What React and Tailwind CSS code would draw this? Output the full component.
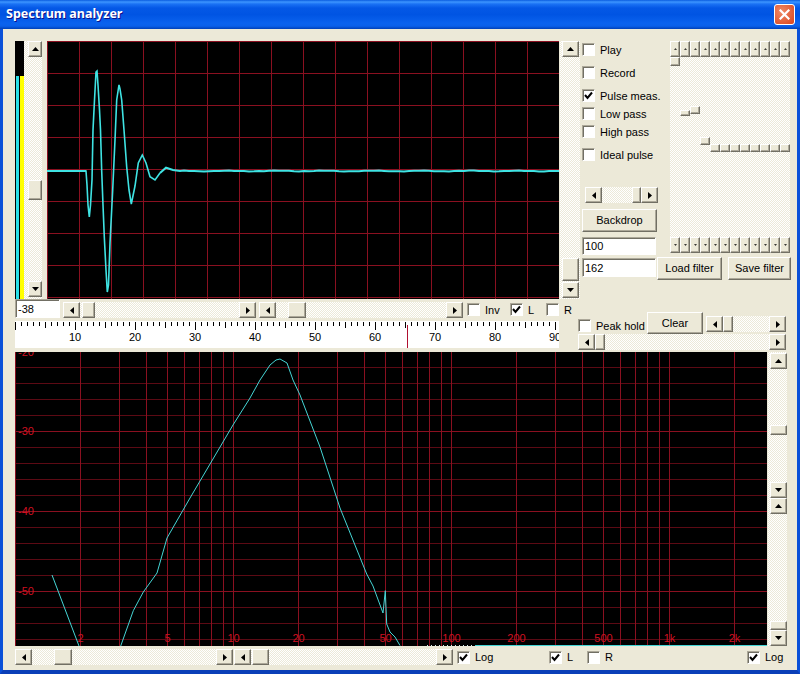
import React from "react";

const face = "bg-[#ece9d8]";
const dither = "bg-[repeating-conic-gradient(#ffffff_0_25%,#ece9d8_0_50%)] bg-[length:2px_2px]";
const raised = "bg-[#ece9d8] border border-t-white border-l-white border-r-[#716f64] border-b-[#716f64] shadow-[inset_-1px_-1px_0_#aca899]";
const sunken = "bg-white border border-t-[#aca899] border-l-[#aca899] border-r-white border-b-white shadow-[inset_1px_1px_0_#716f64]";

function Arrow({ dir, small }) {
  const pts = {
    up: "0,4 7,4 3.5,0",
    down: "0,0 7,0 3.5,4",
    left: "4,0 4,7 0,3.5",
    right: "0,0 0,7 4,3.5",
  };
  const vertical = dir === "up" || dir === "down";
  const w = vertical ? 7 : 4;
  const h = vertical ? 4 : 7;
  return (
    <svg width={small ? 3 : w} height={small ? 2 : h} viewBox={`0 0 ${w} ${h}`}>
      <polygon points={pts[dir]} fill="#000" />
    </svg>
  );
}

function ScrollBtn({ dir, className }) {
  return (
    <div className={`${raised} flex items-center justify-center shrink-0 ${className}`}>
      <Arrow dir={dir} />
    </div>
  );
}

function HScroll({ className, thumb }) {
  return (
    <div className={`${dither} flex h-[16px] shrink-0 ${className}`}>
      <ScrollBtn dir="left" className="w-[17px]" />
      <div className="flex-1">
        <div className={`${raised} h-full ${thumb}`} />
      </div>
      <ScrollBtn dir="right" className="w-[17px]" />
    </div>
  );
}

function VScroll({ className, thumb }) {
  return (
    <div className={`flex flex-col shrink-0 ${className}`}>
      <ScrollBtn dir="up" className="h-[16px]" />
      <div className="flex-1">
        <div className={`${raised} w-full ${thumb}`} />
      </div>
      <ScrollBtn dir="down" className="h-[16px]" />
    </div>
  );
}

function SliderCol({ thumb }) {
  return (
    <div className="flex flex-col w-[10px] h-[212px]">
      <div className={`${raised} h-[16px] flex items-center justify-center`}>
        <Arrow dir="up" small />
      </div>
      <div className="flex-1">
        <div className={`${raised} w-full ${thumb}`} />
      </div>
      <div className={`${raised} h-[16px] flex items-center justify-center`}>
        <Arrow dir="down" small />
      </div>
    </div>
  );
}

function Check({ label, checked, className = "" }) {
  return (
    <div className={`flex items-center h-[13px] shrink-0 ${className}`}>
      <div className={`${sunken} w-[13px] h-[13px] flex items-center justify-center shrink-0`}>
        {checked && (
          <svg width="9" height="9" viewBox="0 0 9 9">
            <polyline points="1,4 3.5,7 8,1.5" fill="none" stroke="#000" strokeWidth="2" />
          </svg>
        )}
      </div>
      <span className="ml-[5px] pt-[1px] whitespace-nowrap">{label}</span>
    </div>
  );
}

function Btn({ className, children }) {
  return (
    <div className={`${raised} flex items-center justify-center shrink-0 ${className}`}>{children}</div>
  );
}

function Field({ className, children }) {
  return (
    <div className={`${sunken} flex items-center pl-[2px] pt-[1px] shrink-0 ${className}`}>{children}</div>
  );
}

// scope trace, taken off the picture
const scopePulse = [
  [0, 171], [39, 171], [40, 185], [41, 205], [42.3, 217], [43.5, 205], [45, 180], [46, 130], [47.5, 100], [49, 72], [50, 71],
  [51, 85], [52.5, 110], [53.5, 130], [54.7, 171], [56, 205], [57.3, 237], [59, 270], [60.3, 292], [61.5, 285], [63, 243],
  [65.7, 190], [68, 140], [69.7, 100], [71.5, 88], [72, 85], [73, 89], [74.7, 100], [77, 130], [79.7, 167], [82, 190], [84.3, 204],
  [88, 186], [91.3, 163], [95.3, 155], [99, 163], [103, 176.7], [108, 180], [113, 173],
];
const scopeTail = [[0, 171], [39, 171]];
const scopeFlat = [[113, 173], [119, 167.7], [126, 170], [133, 171]];
for (let x = 137; x <= 512; x += 5) {
  scopeFlat.push([x, 171 + 0.35 * Math.sin(x * 0.13) + 0.2 * Math.sin(x * 0.41)]);
}
const toPoints = (pts) => pts.map((p) => `${p[0]},${p[1] - 41}`).join(" ");

function Scope() {
  const v = [];
  for (let x = 0; x < 512; x += 32) v.push(x + 0.5);
  const h = [];
  for (let y = 0; y < 258; y += 32) h.push(y + 0.5);
  return (
    <svg width="512" height="258" className="bg-black shrink-0 block">
      {v.map((x) => <line key={x} x1={x} x2={x} y1="0" y2="258" stroke="#8a1020" />)}
      {h.map((y) => <line key={y} y1={y} y2={y} x1="0" x2="512" stroke="#8a1020" />)}
      <polyline points={toPoints(scopePulse)} fill="none" stroke="#3fe3e3" strokeWidth="1.6" />
      <polyline points={toPoints(scopeTail)} fill="none" stroke="#3fe3e3" strokeWidth="2" />
      <polyline points={toPoints(scopeFlat)} fill="none" stroke="#3fe3e3" strokeWidth="2" />
    </svg>
  );
}

function Ruler() {
  const ticks = [];
  for (let u = 0; u <= 90; u++) ticks.push(u);
  return (
    <svg width="544" height="27" className="bg-white block">
      {ticks.map((u) => (
        <line
          key={u}
          x1={u * 6 + 0.5}
          x2={u * 6 + 0.5}
          y1="1"
          y2={u % 10 === 0 ? 9 : u % 5 === 0 ? 7 : 5}
          stroke="#000"
        />
      ))}
      {[10, 20, 30, 40, 50, 60, 70, 80, 90].map((n) => (
        <text key={n} x={n * 6} y="20" textAnchor="middle" className="text-[11px] fill-black">{n}</text>
      ))}
      <line x1="392.5" x2="392.5" y1="4" y2="27" stroke="#b01030" />
    </svg>
  );
}

const tracePts = [
  [120.7, 294], [133.3, 258.7], [143.3, 240], [157, 221], [167, 186], [190, 146], [233, 73], [250, 46], [260, 28], [270, 13],
  [276, 8], [280, 7], [287, 11], [293, 28], [300, 43], [320, 95], [340, 156], [366.7, 222], [373, 234], [383, 261],
  [385.3, 238.7], [386.7, 272], [390, 280], [395, 285], [400, 293.5],
];

function Spectrum() {
  const freqs = [];
  for (const d of [1, 10, 100]) for (let i = 1; i < 10; i++) freqs.push(d * i);
  freqs.push(1000, 2000);
  const fx = (f) => Math.floor(218 * Math.log10(f) + 0.001) + 0.5;
  const rows = [];
  for (let y = 15; y < 294; y += 16) rows.push(y);
  const dbLabels = [["-20", 4], ["-30", 83], ["-40", 163], ["-50", 243]];
  const fLabels = [[2, "2"], [5, "5"], [10, "10"], [20, "20"], [50, "50"], [100, "100"], [200, "200"], [500, "500"], [1000, "1k"], [2000, "2k"]];
  return (
    <svg width="752" height="294" className="bg-black shrink-0 block">
      {rows.map((y) => (
        <line key={y} x1="0" x2="752" y1={y + 0.5} y2={y + 0.5} stroke={(y + 1) % 80 === 0 ? "#8a1020" : "#5c0a14"} />
      ))}
      {freqs.map((f) => <line key={f} x1={fx(f)} x2={fx(f)} y1="0" y2="294" stroke="#8a1020" />)}
      {dbLabels.map(([t, y]) => (
        <text key={t} x="3" y={y} className="text-[11px] fill-[#d01020]">{t}</text>
      ))}
      {fLabels.map(([f, t]) => (
        <text key={f} x={fx(f)} y="290" textAnchor="middle" className="text-[11px] fill-[#d01020]">{t}</text>
      ))}
      <polyline points="37,223 64,294" fill="none" stroke="#45d5d5" />
      <polyline points={tracePts.map((p) => p[0] - 15 + "," + p[1]).join(" ")} fill="none" stroke="#45d5d5" />
      <line x1="412" x2="460" y1="293.5" y2="293.5" stroke="#cfeeee" strokeDasharray="1 3" />
      <line x1="460" x2="752" y1="293.5" y2="293.5" stroke="#45d5d5" />
    </svg>
  );
}

const sliderThumbs = [
  "h-[9px]",
  "mt-[53px] h-[6px]",
  "mt-[49px] h-[8px]",
  "mt-[80px] h-[8px]",
  "mt-[87px] h-[8px]",
  "mt-[87px] h-[8px]",
  "mt-[87px] h-[8px]",
  "mt-[87px] h-[8px]",
  "mt-[87px] h-[8px]",
  "mt-[87px] h-[8px]",
  "mt-[87px] h-[8px]",
  "mt-[87px] h-[8px]",
];

export default function App() {
  return (
    <div className="w-[800px] h-[674px] flex flex-col overflow-hidden font-['Liberation_Sans',sans-serif] text-[11px] leading-none text-black">
      {/* title bar */}
      <div className="h-[29px] shrink-0 flex items-center justify-between pl-[6px] pr-[5px] bg-[linear-gradient(to_bottom,#0a5ce0_0,#3d95ff_2px,#1a72f4_4px,#0458e6_8px,#0054e3_50%,#0a62ee_80%,#0a60ea_90%,#0040b8_100%)]">
        <span className="text-white font-bold text-[12.5px] font-['Noto_Sans',sans-serif] [text-shadow:1px_1px_0_#0f1089]">Spectrum analyzer</span>
        <div className="w-[21px] h-[21px] rounded-[3px] border border-white bg-[radial-gradient(circle_at_35%_35%,#ef8a66,#d9431c)] flex items-center justify-center">
          <svg width="11" height="11" viewBox="0 0 11 11">
            <path d="M1.5 1.5 L9.5 9.5 M9.5 1.5 L1.5 9.5" stroke="#fff" strokeWidth="2.2" strokeLinecap="square" />
          </svg>
        </div>
      </div>

      <div className={`${face} flex-1 border-x-[3px] border-b-[4px] border-x-[#0a50d8] border-b-[#0a3fb8] flex flex-col pl-[12px]`}>
        {/* top row */}
        <div className="flex h-[258px] mt-[12px] shrink-0">
          <div className="w-[9px] bg-black flex pl-[1px] gap-[1px] pt-[35px] shrink-0">
            <div className="w-[3px] bg-[#2ae0e8]" />
            <div className="w-[4px] bg-[#ffff00]" />
          </div>
          <div className={`${dither} w-[18px] pl-[4px] flex shrink-0`}>
            <VScroll className="w-[14px] pb-[2px]" thumb="mt-[123px] h-[20px]" />
          </div>
          <div className="w-[5px] shrink-0" />
          <Scope />
          <div className={`${dither} w-[20px] flex pl-[2px] shrink-0 ml-[1px]`}>
            <VScroll className="w-[17px] pb-[1px]" thumb="mt-[201px] h-[23px]" />
          </div>

          <div className="ml-[2px] w-[209px] flex flex-col shrink-0">
            <div className="flex h-[216px] shrink-0">
              <div className="w-[75px] flex flex-col shrink-0">
                <Check label="Play" className="mt-[2px]" />
                <Check label="Record" className="mt-[10px]" />
                <Check label="Pulse meas." checked className="mt-[10px]" />
                <Check label="Low pass" className="mt-[5px]" />
                <Check label="High pass" className="mt-[5px]" />
                <Check label="Ideal pulse" className="mt-[10px]" />
                <HScroll className="mt-[26px] ml-[3px] w-[72px]" thumb="ml-[30px] w-[9px]" />
                <Btn className="mt-[6px] h-[23px]">Backdrop</Btn>
                <Field className="mt-[5px] h-[18px] w-[74px]">100</Field>
              </div>
              <div className={`${dither} ml-[13px] w-[120px] h-[212px] flex`}>
                {sliderThumbs.map((t, i) => <SliderCol key={i} thumb={t} />)}
              </div>
            </div>
            <div className="flex">
              <Field className="h-[19px] w-[74px] mt-[1px]">162</Field>
              <Btn className="ml-[1px] w-[65px] h-[23px]">Load filter</Btn>
              <Btn className="ml-[6px] w-[63px] h-[23px]">Save filter</Btn>
            </div>
          </div>
        </div>

        {/* middle strip */}
        <div className="flex h-[53px] shrink-0">
          <div className="w-[544px] shrink-0 flex flex-col">
            <div className="flex h-[22px] shrink-0">
              <Field className="w-[45px] h-[19px]">-38</Field>
              <HScroll className="ml-[3px] mt-[3px] w-[193px]" thumb="ml-[2px] w-[13px]" />
              <HScroll className="ml-[3px] mt-[3px] w-[204px]" thumb="ml-[12px] w-[18px]" />
              <Check label="Inv" className="ml-[4px] mt-[4px] w-[43px]" />
              <Check label="L" checked className="mt-[4px] w-[36px]" />
              <Check label="R" className="mt-[4px]" />
            </div>
            <Ruler />
          </div>
          <div className="ml-[19px] w-[208px] flex flex-col shrink-0 mt-[13px]">
            <div className="flex h-[22px] shrink-0">
              <Check label="Peak hold" className="mt-[7px] w-[69px]" />
              <Btn className="w-[56px] h-[22px]">Clear</Btn>
              <HScroll className="ml-[3px] mt-[4px] w-[80px]" thumb="w-[10px]" />
            </div>
            <HScroll className="w-[208px]" thumb="w-[10px]" />
          </div>
        </div>

        {/* spectrum */}
        <div className="flex h-[294px] shrink-0">
          <Spectrum />
          <div className={`${dither} ml-[1px] w-[19px] pl-[2px] pt-[1px] flex flex-col shrink-0`}>
            <VScroll className="w-[17px] h-[145px]" thumb="mt-[56px] h-[10px]" />
            <VScroll className="w-[17px] h-[148px]" thumb="mt-[107px] h-[9px]" />
          </div>
        </div>

        {/* bottom strip */}
        <div className="flex items-center mt-[3px]">
          <HScroll className="w-[218px]" thumb="ml-[22px] w-[18px]" />
          <HScroll className="ml-[1px] w-[219px]" thumb="ml-[1px] w-[17px]" />
          <Check label="Log" checked className="ml-[4px] w-[92px]" />
          <Check label="L" checked className="w-[38px]" />
          <Check label="R" className="w-[160px]" />
          <Check label="Log" checked />
        </div>
      </div>
    </div>
  );
}
